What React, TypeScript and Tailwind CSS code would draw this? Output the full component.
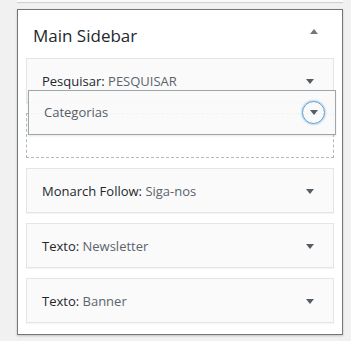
import React from "react";

const font = { fontFamily: '"Open Sans", "Noto Sans", sans-serif' };

function Caret({ up = false, className = "" }: { up?: boolean; className?: string }) {
  return (
    <svg width="8" height="5" viewBox="0 0 8 5" className={className}>
      {up ? <path d="M0 5 L4 0 L8 5 Z" fill="currentColor" /> : <path d="M0 0 L8 0 L4 5 Z" fill="currentColor" />}
    </svg>
  );
}

function Widget({ name, title }: { name: string; title: string }) {
  return (
    <div className="flex h-[45px] items-center justify-between border border-[#e5e5e5] bg-[#fafafa] pl-[15px] pr-[19px] shadow-[0_1px_1px_rgba(0,0,0,0.04)]">
      <span className="mt-[2px] text-[13px] text-[#23282d]">
        {name}: <span className="text-[#5b646d]">{title}</span>
      </span>
      <Caret className="mt-[1px] text-[#555d66]" />
    </div>
  );
}

export default function App() {
  return (
    <div className="min-h-[341px] bg-[#f1f1f1]" style={font}>
      <div className="ml-[17px] mr-[8px] h-[2px] bg-[#fafafa] shadow-[0_1px_1px_rgba(0,0,0,0.15)]" />
      <div className="relative ml-[17px] mr-[8px] mt-[7px] border border-[#72777c] bg-white shadow-[0_1px_2px_rgba(0,0,0,0.2)]">
        <div className="flex h-[48px] items-center justify-between pl-[15px] pr-[24px]">
          <h2 className="mt-[3px] text-[17px] text-[#23282d]">Main Sidebar</h2>
          <Caret up className="mb-[6px] text-[#72777c]" />
        </div>
        <div className="flex flex-col gap-[10px] px-[8px] pb-[11px]">
          <Widget name="Pesquisar" title="PESQUISAR" />
          <div className="h-[45px] border border-dashed border-[#b4b9be]" />
          <Widget name="Monarch Follow" title="Siga-nos" />
          <Widget name="Texto" title="Newsletter" />
          <Widget name="Texto" title="Banner" />
        </div>
        <div className="absolute left-[10px] top-[80px] flex h-[45px] w-[308px] items-center justify-between border border-[#a0a5aa] bg-[#fafafa]/90 pl-[15px] pr-[10px] shadow-[0_1px_2px_rgba(0,0,0,0.1)]">
          <span className="mt-[1px] text-[13px] text-[#555d66]">Categorias</span>
          <span className="flex h-[23px] w-[23px] items-center justify-center rounded-full border border-[#5b9dd9] shadow-[0_0_2px_rgba(30,140,190,0.8)]">
            <Caret className="text-[#555d66]" />
          </span>
        </div>
      </div>
    </div>
  );
}
